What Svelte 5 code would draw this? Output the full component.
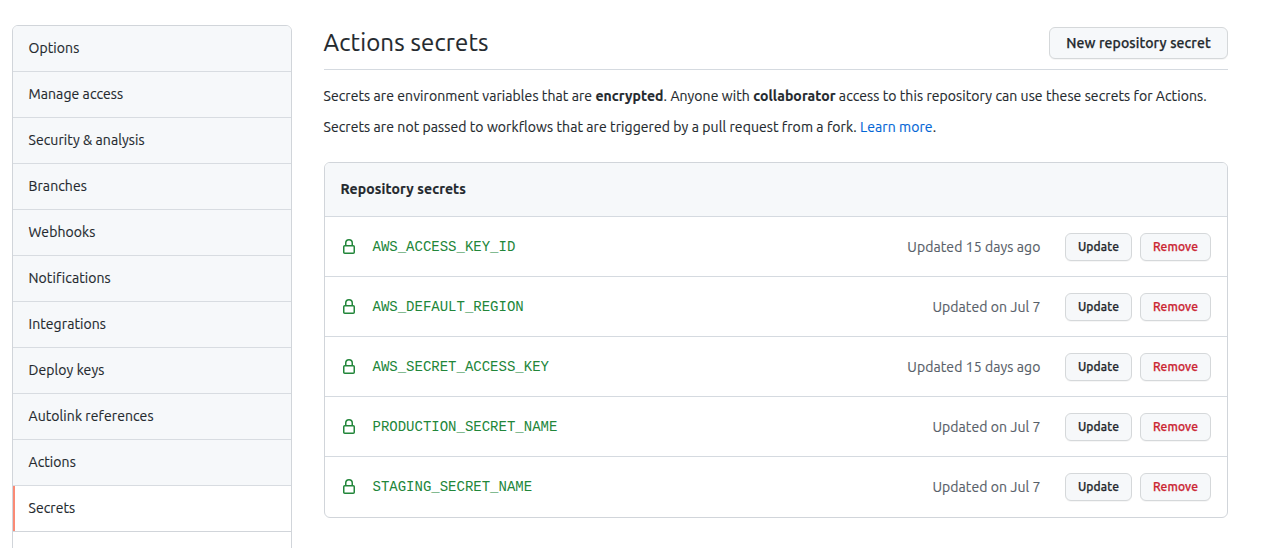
<script>
  const menu = [
    'Options', 'Manage access', 'Security & analysis', 'Branches', 'Webhooks',
    'Notifications', 'Integrations', 'Deploy keys', 'Autolink references', 'Actions', 'Secrets'
  ];
  const secrets = [
    { name: 'AWS_ACCESS_KEY_ID', updated: 'Updated 15 days ago' },
    { name: 'AWS_DEFAULT_REGION', updated: 'Updated on Jul 7' },
    { name: 'AWS_SECRET_ACCESS_KEY', updated: 'Updated 15 days ago' },
    { name: 'PRODUCTION_SECRET_NAME', updated: 'Updated on Jul 7' },
    { name: 'STAGING_SECRET_NAME', updated: 'Updated on Jul 7' }
  ];
</script>

<div class="page">
  <nav class="menu">
    {#each menu as item}
      <a class="item" class:active={item === 'Secrets'} href="#top">{item}</a>
    {/each}
  </nav>

  <main>
    <header class="head">
      <h2>Actions secrets</h2>
      <button class="btn large">New repository secret</button>
    </header>

    <p class="first">Secrets are environment variables that are <strong>encrypted</strong>. Anyone with <strong>collaborator</strong> access to this repository can use these secrets for Actions.</p>
    <p class="second">Secrets are not passed to workflows that are triggered by a pull request from a fork. <a href="#top">Learn more</a>.</p>

    <section class="box">
      <h3>Repository secrets</h3>
      {#each secrets as s}
        <div class="row">
          <svg viewBox="0 0 16 16" width="16" height="16" aria-hidden="true">
            <path fill-rule="evenodd" d="M4 4v2h-.25A1.75 1.75 0 002 7.75v5.5c0 .966.784 1.75 1.75 1.75h8.5A1.75 1.75 0 0014 13.25v-5.5A1.75 1.75 0 0012.25 6H12V4a4 4 0 10-8 0zm6.5 2V4a2.5 2.5 0 10-5 0v2h5zM12 7.5h.25a.25.25 0 01.25.25v5.5a.25.25 0 01-.25.25h-8.5a.25.25 0 01-.25-.25v-5.5a.25.25 0 01.25-.25H12z" />
          </svg>
          <code>{s.name}</code>
          <span class="updated">{s.updated}</span>
          <button class="btn">Update</button>
          <button class="btn danger">Remove</button>
        </div>
      {/each}
    </section>
  </main>
</div>

<style>
  :global(body) { margin: 0; background: #fff; }
  .page {
    box-sizing: border-box;
    height: 548px;
    padding: 25px 44px 0 12px;
    overflow: hidden;
    display: flex;
    align-items: flex-start;
    gap: 32px;
    font: 400 14px/21px Ubuntu, 'Noto Sans', sans-serif;
    letter-spacing: 0.084px;
    -webkit-text-stroke: 0.15px currentColor;
    color: #24292e;
  }
  .menu {
    box-sizing: border-box;
    flex: none;
    width: 280px;
    height: 560px;
    border: 1px solid #d1d5da;
    border-radius: 6px;
    overflow: hidden;
  }
  .item {
    box-sizing: border-box;
    display: block;
    height: 46px;
    padding: 12px 16px 0 15.5px;
    line-height: 20px;
    border-bottom: 1px solid #d8dce1;
    background: #f6f8fa;
    color: #24292e;
    text-decoration: none;
  }
  .item.active {
    background: #fff;
    border-bottom-color: #d1d5da;
    box-shadow: inset 2px 0 #fa8a75;
  }
  main { flex: 1; min-width: 0; }
  .head {
    box-sizing: border-box;
    height: 45px;
    padding-top: 2px;
    display: flex;
    justify-content: space-between;
    align-items: flex-start;
    border-bottom: 1px solid #d5dae0;
  }
  h2 {
    margin: -2px 0 0 -0.5px;
    font-size: 24px;
    line-height: 36px;
    font-weight: 400;
    letter-spacing: 0.16px;
  }
  .btn {
    box-sizing: border-box;
    flex: none;
    width: 67px;
    height: 28px;
    padding: 0;
    border: 1px solid #d5d8da;
    border-radius: 6px;
    background: #f6f8fa;
    box-shadow: 0 1px 0 rgba(27, 31, 35, .04);
    font: 500 12px/20px Ubuntu, 'Noto Sans', sans-serif;
    letter-spacing: 0.12px;
    -webkit-text-stroke: 0.25px currentColor;
    color: #24292e;
    white-space: nowrap;
  }
  .btn.large { width: 179px; height: 32px; padding-bottom: 1px; font-size: 14px; }
  .btn.danger { width: 71px; margin-left: 8px; color: #cb2431; }
  p { margin: 0 0 0 -0.5px; white-space: nowrap; }
  .first { margin-top: 16px; }
  .second { margin-top: 10px; }
  p a { color: #0366d6; text-decoration: none; }
  strong { font-weight: 700; }
  .box {
    box-sizing: border-box;
    height: 356px;
    margin-top: 24px;
    border: 1px solid #d1d5da;
    border-radius: 6px;
    overflow: hidden;
  }
  h3 {
    box-sizing: border-box;
    height: 53px;
    margin: 0;
    padding: 16px 15.5px;
    background: #f6f8fa;
    font-size: 14px;
    line-height: 21px;
    font-weight: 700;
    letter-spacing: 0.12px;
  }
  .row {
    box-sizing: border-box;
    height: 60px;
    padding: 0 16px;
    display: flex;
    align-items: center;
    border-top: 1px solid #d5dae0;
  }
  svg { flex: none; fill: #22863a; }
  code {
    margin-left: 15.5px;
    padding-top: 1px;
    font: 14px/21px 'Liberation Mono', monospace;
    letter-spacing: 0;
    -webkit-text-stroke: 0;
    color: #22863a;
  }
  .updated { margin-left: auto; padding-top: 1px; margin-right: 24.5px; color: #586069; }
</style>
